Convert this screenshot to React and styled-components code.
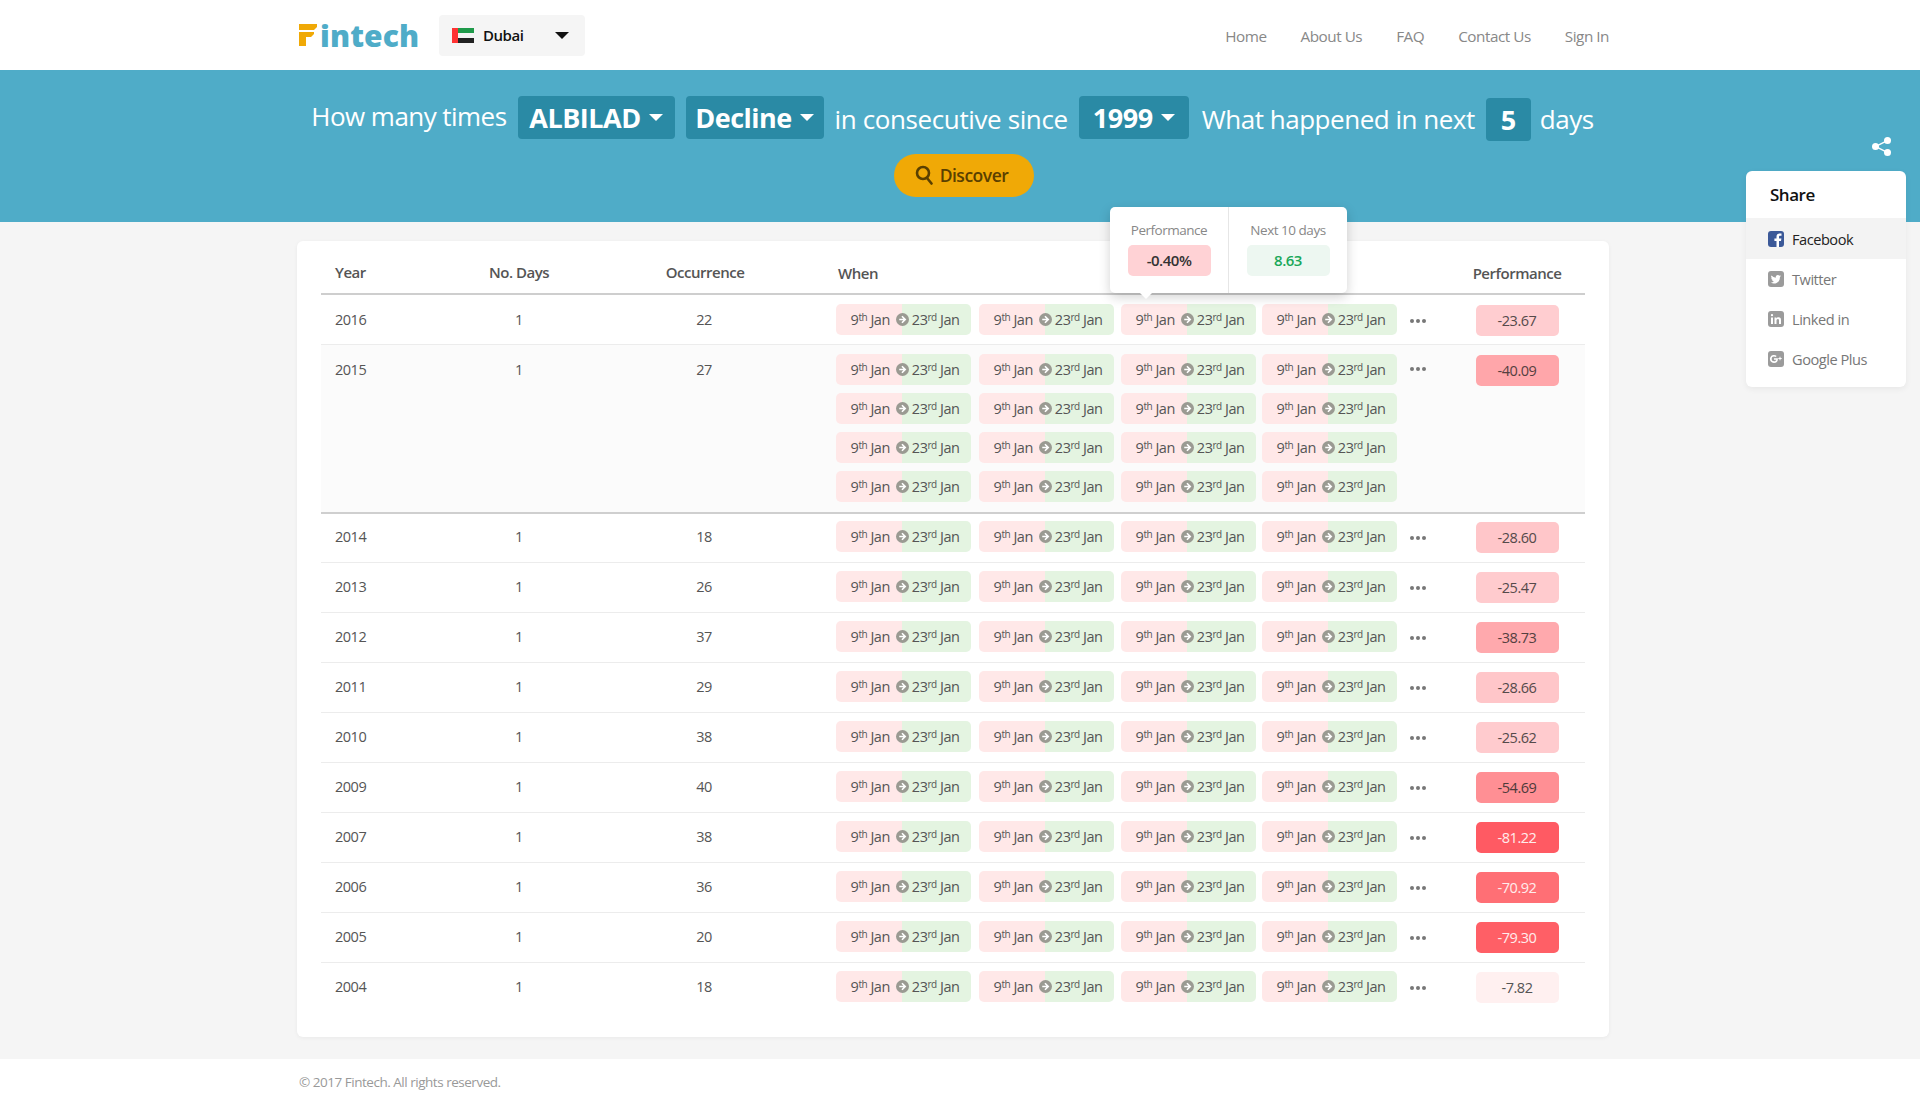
import React from 'react'
import styled, { createGlobalStyle } from 'styled-components'

const GlobalStyle = createGlobalStyle`
  * { box-sizing: border-box; }
  html, body { margin: 0; padding: 0; }
  body {
    background: #f5f5f5;
    font-family: "Open Sans", "Noto Sans", sans-serif;
    color: #555;
    letter-spacing: -0.48px;
  }
`

const Container = styled.div`
  width: 1312px;
  margin-left: 297px;
`

const Header = styled.header`
  height: 70px;
  background: #fff;
`

const HeaderInner = styled(Container)`
  display: flex;
  align-items: center;
  height: 70px;
  padding-left: 2px;
`

const Logo = styled.div`
  display: flex;
  align-items: center;
  width: 140px;
  font-size: 30px;
  font-weight: 800;
  color: #4facc8;
  letter-spacing: 0.005em;
`

const LogoSvg = styled.svg`
  margin-right: 3px;
`

const CitySelect = styled.div`
  display: flex;
  align-items: center;
  width: 146px;
  height: 41px;
  padding: 0 12px 0 13px;
  background: #f5f5f5;
  border-radius: 4px;
  font-size: 15px;
  font-weight: 600;
  color: #111;
  gap: 9px;
`

const Caret = styled.span`
  display: inline-block;
  border-left: ${p => p.$size}px solid transparent;
  border-right: ${p => p.$size}px solid transparent;
  border-top: ${p => p.$size}px solid ${p => p.$color};
`

const CityCaret = styled(Caret)`
  margin-left: auto;
  margin-right: 4px;
`

const Nav = styled.nav`
  display: flex;
  margin-left: auto;
  gap: 34px;
  padding-top: 2px;
  font-size: 15.3px;
  color: #888;
`

const Hero = styled.section`
  position: relative;
  height: 152px;
  background: #4facc8;
  padding: 26px 15px 0 0;
`

const Sentence = styled.div`
  display: flex;
  justify-content: center;
  align-items: flex-start;
  gap: 11px;
  height: 45px;
  color: #fff;
  font-size: 26px;
  line-height: 40px;
`

const Words = styled.span`
  margin-left: ${p => p.$shift || 0}px;
  padding-top: ${p => (p.$low ? 3 : 0)}px;
  letter-spacing: ${p => p.$spacing || '-0.48px'};
`

const Pick = styled.div`
  display: flex;
  align-items: center;
  justify-content: center;
  gap: 8px;
  width: ${p => p.$w}px;
  height: 43px;
  margin-top: ${p => (p.$low ? 2 : 0)}px;
  background: #2a8aa5;
  border-radius: 4px;
  font-size: 27px;
  font-weight: 700;
`

const DiscoverRow = styled.div`
  display: flex;
  justify-content: center;
  margin-top: 13px;
  padding-left: 23px;
`

const Discover = styled.button`
  display: flex;
  align-items: center;
  justify-content: center;
  gap: 7px;
  width: 140px;
  height: 43px;
  padding: 0 5px 1px 0;
  border: 0;
  border-radius: 22px;
  background: #f0a906;
  color: #5a4000;
  font: 600 17.5px "Open Sans", sans-serif;
  letter-spacing: -0.48px;
`

const ShareToggle = styled.div`
  position: absolute;
  top: 67px;
  left: 1872px;
  line-height: 0;
`

const SharePanel = styled.aside`
  position: absolute;
  top: 101px;
  left: 1746px;
  width: 160px;
  height: 216px;
  padding-top: 7px;
  background: #fff;
  border-radius: 6px;
  box-shadow: 0 2px 6px rgba(0, 0, 0, 0.06);
  z-index: 5;
`

const ShareTitle = styled.div`
  height: 40px;
  padding-left: 24px;
  font-size: 17px;
  line-height: 33px;
  font-weight: 600;
  color: #111;
`

const ShareItem = styled.div`
  display: flex;
  align-items: center;
  gap: 8px;
  height: ${p => (p.$active ? 41 : 40)}px;
  padding-left: 22px;
  font-size: 14.6px;
  color: ${p => (p.$active ? '#222' : '#777')};
  background: ${p => (p.$active ? '#f3f3f3' : 'transparent')};
`

const Card = styled(Container)`
  position: relative;
  margin-top: 19px;
  height: 796px;
  padding: 0 24px;
  background: #fff;
  border-radius: 6px;
  box-shadow: 0 1px 4px rgba(0, 0, 0, 0.05);
`

const HeadRow = styled.div`
  display: grid;
  grid-template-columns: 115px 166px 206px 641px 136px;
  height: 54px;
  align-items: center;
  padding-top: 11px;
  border-bottom: 2px solid #cecece;
  font-size: 15px;
  font-weight: 600;
  color: #555;
`

const Row = styled.div`
  display: grid;
  grid-template-columns: 115px 166px 204px 643px 136px;
  padding: ${p => p.$top}px 0 ${p => p.$bottom}px;
  background: ${p => (p.$open ? '#fbfbfb' : 'transparent')};
  border-bottom: ${p => (p.$open ? '2px solid #cfcfcf' : '1px solid #ececec')};
  font-size: 14.5px;
  color: #555;

  &:last-child {
    border-bottom: 0;
  }
`

const Cell = styled.div`
  height: 31px;
  line-height: 31px;
  padding-left: ${p => (p.$left ? 14 : 0)}px;
  text-align: ${p => (p.$left ? 'left' : 'center')};
`

const WhenHead = styled.div`
  padding-left: 30px;
`

const PerfHead = styled.div`
  text-align: center;
`

const When = styled.div`
  display: flex;
  align-items: flex-start;
  padding-left: 30px;
`

const PillGrid = styled.div`
  display: grid;
  grid-template-columns: 143px 142px 141px 135px;
  row-gap: 8px;
  width: 561px;
`

const Pill = styled.div`
  display: flex;
  align-items: center;
  justify-content: center;
  width: 135px;
  height: 31px;
  padding: 0 0 1px 3px;
  border-radius: 5px;
  background: linear-gradient(90deg, #ffe8e8 0, #ffe8e8 66px, #e4f4e1 66px, #e4f4e1 100%);
  font-size: 14.5px;
  color: #555;
  gap: 3px;
`

const PillDate = styled.span`
  white-space: nowrap;

  sup {
    font-size: 10px;
    line-height: 0;
    vertical-align: 4px;
  }
`

const ArrowSvg = styled.svg`
  flex: none;
  margin: 1px 0 0 3px;
`

const More = styled.div`
  display: flex;
  gap: 2px;
  height: ${p => (p.$open ? 30 : 33)}px;
  align-items: center;
  margin-left: 13px;
`

const Dot = styled.i`
  width: 4px;
  height: 4px;
  border-radius: 50%;
  background: #777;
`

const PerfCell = styled.div`
  display: flex;
  justify-content: center;
`

const PerfBadge = styled.div`
  width: 83px;
  height: 31px;
  margin-top: 1px;
  line-height: 31px;
  text-align: center;
  border-radius: 5px;
  background: ${p => p.$bg};
  color: ${p => p.$fg};
  font-size: 14.5px;
`

const Tooltip = styled.div`
  position: absolute;
  left: 813px;
  top: -34px;
  display: flex;
  width: 237px;
  height: 86px;
  background: #fff;
  border-radius: 5px;
  box-shadow: 0 4px 12px rgba(0, 0, 0, 0.18);
  z-index: 4;

  &::after {
    content: '';
    position: absolute;
    left: 30px;
    bottom: -6px;
    border-left: 6px solid transparent;
    border-right: 6px solid transparent;
    border-top: 6px solid #fff;
  }
`

const TipCol = styled.div`
  display: flex;
  flex-direction: column;
  align-items: center;
  flex: 1;
  padding-top: 13px;

  & + & {
    border-left: 1px solid #e6e6e6;
  }
`

const TipLabel = styled.div`
  font-size: 13.5px;
  line-height: 20px;
  color: #888;
`

const TipValue = styled.div`
  width: 83px;
  height: 31px;
  margin-top: 5px;
  line-height: 30px;
  text-align: center;
  border-radius: 5px;
  background: ${p => p.$bg};
  color: ${p => p.$fg};
  font-size: 15px;
  font-weight: 600;
`

const Footer = styled.footer`
  margin-top: 22px;
  height: 45px;
  background: #fff;
`

const FooterInner = styled(Container)`
  padding-left: 2px;
  font-size: 13.5px;
  line-height: 47px;
  color: #999;
`

function FlagIcon() {
  return (
    <svg width="22" height="15" viewBox="0 0 22 15">
      <rect width="22" height="5" fill="#1f9a4a" />
      <rect y="5" width="22" height="5" fill="#f4f4f4" />
      <rect y="10" width="22" height="5" fill="#222" />
      <rect width="6" height="15" fill="#f33" />
    </svg>
  )
}

function LogoMark() {
  return (
    <LogoSvg width="18" height="22" viewBox="0 0 18 22">
      <path d="M0 0h18v3l-3 3H0z" fill="#f0a906" />
      <path d="M0 8h15v2l-3 3H7v9H0z" fill="#f0a906" />
    </LogoSvg>
  )
}

function SearchIcon() {
  return (
    <svg width="18" height="20" viewBox="0 0 18 20" fill="none" stroke="#5a4000" strokeWidth="2.6">
      <circle cx="8" cy="8" r="6" />
      <path d="M12 13l4.500 5.500" strokeLinecap="round" />
    </svg>
  )
}

function ShareIcon() {
  return (
    <svg width="19" height="19" viewBox="0 0 19 19" fill="#fff">
      <circle cx="15.5" cy="3.5" r="3.5" />
      <circle cx="3.5" cy="9.5" r="3.5" />
      <circle cx="15.5" cy="15.5" r="3.5" />
      <path d="M3 9L15 3l.6 1.2L3.600 10.200zM3.600 8.800l12 6-.6 1.200-12-6z" />
    </svg>
  )
}

function SocialIcon({ kind, color }) {
  return (
    <svg width="16" height="16" viewBox="0 0 16 16">
      <rect width="16" height="16" rx="3" fill={color} />
      {kind === 'fb' && <path d="M11 16V10h2l.4-2.500H11V6c0-.8.3-1.200 1.300-1.200h1.200V2.600c-.4 0-1-.1-1.800-.1-2 0-3.200 1.200-3.200 3.200v1.800H6.400V10h2.100v6z" fill="#fff" />}
      {kind === 'tw' && <path d="M13 5.100c-.4.2-.8.300-1.200.400.4-.3.800-.7.900-1.200-.4.200-.9.400-1.300.5a2.100 2.100 0 0 0-3.600 1.900A5.900 5.900 0 0 1 3.500 4.500a2.100 2.100 0 0 0 .6 2.800c-.3 0-.6-.1-.9-.3 0 1 .7 1.900 1.700 2.100-.3.100-.6.100-.9 0 .3.800 1 1.400 1.900 1.500A4.200 4.200 0 0 1 2.800 11.500a5.900 5.900 0 0 0 9.100-5.300c.4-.3.800-.7 1.100-1.100z" fill="#fff" />}
      {kind === 'in' && <path d="M3 6.500h2V13H3zM4 3a1.100 1.100 0 1 1 0 2.300A1.100 1.100 0 0 1 4 3zM6.500 6.500h1.900v.9c.4-.6 1.100-1.100 2.100-1.100 2 0 2.500 1.300 2.500 3V13h-2V9.700c0-.8-.1-1.700-1.100-1.700s-1.400.8-1.400 1.700V13h-2z" fill="#fff" />}
      {kind === 'gp' && <path d="M6 7.300v1.500h2.300C8.100 9.700 7.400 10.300 6 10.300a2.400 2.400 0 0 1 0-4.800c.7 0 1.200.2 1.600.6l1.100-1.100A4 4 0 1 0 6 11.900c2.400 0 3.900-1.600 3.900-4 0-.2 0-.4-.1-.6zM12.500 7V5.800h-1V7h-1.200v1h1.200v1.200h1V8h1.200V7z" fill="#fff" />}
    </svg>
  )
}

function ArrowIcon() {
  return (
    <ArrowSvg width="13" height="13" viewBox="0 0 12 12">
      <circle cx="6" cy="6" r="6" fill="#9a9a92" />
      <path d="M5.500 3L8.500 6 5.500 9M3 6h5" fill="none" stroke="#fff" strokeWidth="1.500" />
    </ArrowSvg>
  )
}

const years = [
  { year: 2016, occ: 22, perf: '-23.67', bg: '#ffcdd0', fg: '#554a4a', top: 9, bottom: 7 },
  { year: 2015, occ: 27, perf: '-40.09', bg: '#ffa6aa', fg: '#554040', top: 9, bottom: 10, open: true },
  { year: 2014, occ: 18, perf: '-28.60', bg: '#ffc6c9', fg: '#554a4a', top: 7, bottom: 8 },
  { year: 2013, occ: 26, perf: '-25.47', bg: '#ffcbce', fg: '#554a4a', top: 8, bottom: 8 },
  { year: 2012, occ: 37, perf: '-38.73', bg: '#ffa9ad', fg: '#554040', top: 8, bottom: 8 },
  { year: 2011, occ: 29, perf: '-28.66', bg: '#ffc6c9', fg: '#554a4a', top: 8, bottom: 8 },
  { year: 2010, occ: 38, perf: '-25.62', bg: '#ffcbce', fg: '#554a4a', top: 8, bottom: 8 },
  { year: 2009, occ: 40, perf: '-54.69', bg: '#ff8f94', fg: '#4d3a3a', top: 8, bottom: 8 },
  { year: 2007, occ: 38, perf: '-81.22', bg: '#ff5a63', fg: '#ffecec', top: 8, bottom: 8 },
  { year: 2006, occ: 36, perf: '-70.92', bg: '#ff6f75', fg: '#ffecec', top: 8, bottom: 8 },
  { year: 2005, occ: 20, perf: '-79.30', bg: '#ff5f66', fg: '#ffecec', top: 8, bottom: 8 },
  { year: 2004, occ: 18, perf: '-7.82', bg: '#fff0f0', fg: '#555', top: 8, bottom: 8 },
]

const socials = [
  { kind: 'fb', label: 'Facebook', color: '#3b5998', active: true },
  { kind: 'tw', label: 'Twitter', color: '#9b9b9b' },
  { kind: 'in', label: 'Linked in', color: '#9b9b9b' },
  { kind: 'gp', label: 'Google Plus', color: '#9b9b9b' },
]

function DatePill() {
  return (
    <Pill>
      <PillDate>9<sup>th</sup> Jan</PillDate>
      <ArrowIcon />
      <PillDate>23<sup>rd</sup> Jan</PillDate>
    </Pill>
  )
}

function YearRow({ row }) {
  const count = row.open ? 16 : 4
  return (
    <Row $open={row.open} $top={row.top} $bottom={row.bottom}>
      <Cell $left>{row.year}</Cell>
      <Cell>1</Cell>
      <Cell>{row.occ}</Cell>
      <When>
        <PillGrid>
          {Array.from({ length: count }, (_, i) => <DatePill key={i} />)}
        </PillGrid>
        <More $open={row.open}><Dot /><Dot /><Dot /></More>
      </When>
      <PerfCell>
        <PerfBadge $bg={row.bg} $fg={row.fg}>{row.perf}</PerfBadge>
      </PerfCell>
    </Row>
  )
}

export default function App() {
  return (
    <>
      <GlobalStyle />
      <Header>
        <HeaderInner>
          <Logo><LogoMark />intech</Logo>
          <CitySelect>
            <FlagIcon />
            Dubai
            <CityCaret $size={7} $color="#111" />
          </CitySelect>
          <Nav>
            <span>Home</span>
            <span>About Us</span>
            <span>FAQ</span>
            <span>Contact Us</span>
            <span>Sign In</span>
          </Nav>
        </HeaderInner>
      </Header>
      <Hero>
        <Sentence>
          <Words $spacing="-0.55px">How many times</Words>
          <Pick $w={157}>ALBILAD <Caret $size={7} $color="#fff" /></Pick>
          <Pick $w={138}>Decline <Caret $size={7} $color="#fff" /></Pick>
          <Words $low $spacing="-0.38px">in consecutive since</Words>
          <Pick $w={110}>1999 <Caret $size={7} $color="#fff" /></Pick>
          <Words $low $shift={2}>What happened in next</Words>
          <Pick $w={45} $low>5</Pick>
          <Words $low $shift={-2}>days</Words>
        </Sentence>
        <DiscoverRow>
          <Discover><SearchIcon />Discover</Discover>
        </DiscoverRow>
        <ShareToggle><ShareIcon /></ShareToggle>
        <SharePanel>
          <ShareTitle>Share</ShareTitle>
          {socials.map(s => (
            <ShareItem key={s.kind} $active={s.active}>
              <SocialIcon kind={s.kind} color={s.color} />
              {s.label}
            </ShareItem>
          ))}
        </SharePanel>
      </Hero>
      <Card>
        <Tooltip>
          <TipCol>
            <TipLabel>Performance</TipLabel>
            <TipValue $bg="#ffd2d5" $fg="#333">-0.40%</TipValue>
          </TipCol>
          <TipCol>
            <TipLabel>Next 10 days</TipLabel>
            <TipValue $bg="#edf7f1" $fg="#1aa85a">8.63</TipValue>
          </TipCol>
        </Tooltip>
        <HeadRow>
          <Cell $left>Year</Cell>
          <Cell>No. Days</Cell>
          <Cell>Occurrence</Cell>
          <WhenHead>When</WhenHead>
          <PerfHead>Performance</PerfHead>
        </HeadRow>
        {years.map(row => <YearRow key={row.year} row={row} />)}
      </Card>
      <Footer>
        <FooterInner>© 2017 Fintech. All rights reserved.</FooterInner>
      </Footer>
    </>
  )
}
